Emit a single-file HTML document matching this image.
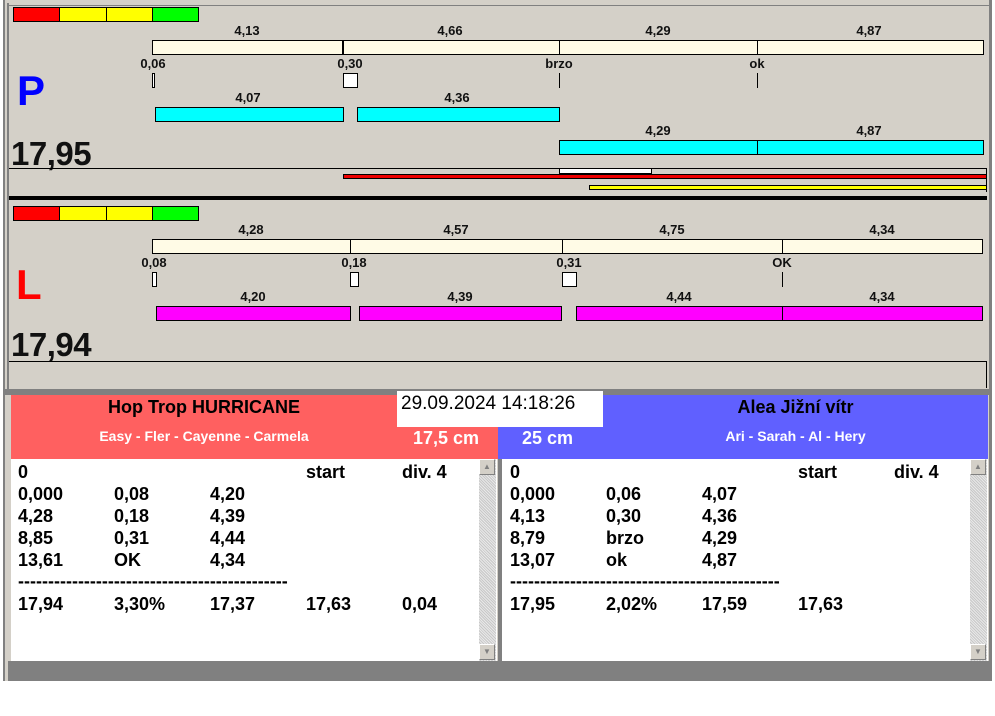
<!DOCTYPE html>
<html><head><meta charset="utf-8"><style>
*{margin:0;padding:0;box-sizing:border-box}
body{width:995px;height:716px;background:#fff;position:relative;overflow:hidden;font-family:"Liberation Sans",Arial,sans-serif;font-weight:bold}
div{position:absolute}
.bg{background:#d4d0c8}
.b{border:1px solid #000}
.cr{background:#fffbe6}
.cy{background:#00ffff}
.mg{background:#ff00ff}
.lb{font-size:13px;width:80px;text-align:center;color:#111}
.t{font-size:18px;color:#000;line-height:22px}
.sb{width:17px;background:repeating-linear-gradient(45deg,#e8e8e8 0 1px,#c8c8c8 1px 2px)}
.sbb{width:16px;height:16px;background:#d4d0c8;border:1px solid #fff;border-right-color:#808080;border-bottom-color:#808080;font-size:8px;color:#808080;text-align:center;line-height:14px}
</style></head><body>
<div class="bg" style="left:3px;top:0;width:989px;height:681px"></div>
<div style="left:3px;top:0;width:2px;height:681px;background:#808080"></div>
<div style="left:7px;top:3px;width:2px;height:386px;background:#808080"></div>
<div style="left:989px;top:0;width:3px;height:681px;background:#808080"></div>
<div style="left:7px;top:5px;width:982px;height:1px;background:#808080"></div>

<!-- P panel -->
<div style="left:13px;top:7px;width:47px;height:15px;background:#f00" class="b"></div>
<div style="left:59px;top:7px;width:48px;height:15px;background:#ff0" class="b"></div>
<div style="left:106px;top:7px;width:47px;height:15px;background:#ff0" class="b"></div>
<div style="left:152px;top:7px;width:47px;height:15px;background:#0f0" class="b"></div>

<div class="lb" style="left:207px;top:23px">4,13</div>
<div class="lb" style="left:410px;top:23px">4,66</div>
<div class="lb" style="left:618px;top:23px">4,29</div>
<div class="lb" style="left:829px;top:23px">4,87</div>
<div class="cr b" style="left:152px;top:40px;width:832px;height:15px"></div>
<div style="left:342px;top:40px;width:2px;height:15px;background:#000"></div>
<div style="left:559px;top:40px;width:1px;height:15px;background:#000"></div>
<div style="left:757px;top:40px;width:1px;height:15px;background:#000"></div>
<div class="lb" style="left:113px;top:56px">0,06</div>
<div class="lb" style="left:310px;top:56px">0,30</div>
<div class="lb" style="left:519px;top:56px">brzo</div>
<div class="lb" style="left:717px;top:56px">ok</div>
<div class="b" style="left:152px;top:73px;width:3px;height:15px;background:#fff"></div>
<div class="b" style="left:343px;top:73px;width:15px;height:15px;background:#fff"></div>
<div style="left:559px;top:73px;width:1px;height:15px;background:#000"></div>
<div style="left:757px;top:73px;width:1px;height:15px;background:#000"></div>
<div class="lb" style="left:208px;top:90px">4,07</div>
<div class="lb" style="left:417px;top:90px">4,36</div>
<div class="cy b" style="left:155px;top:107px;width:189px;height:15px"></div>
<div class="cy b" style="left:357px;top:107px;width:203px;height:15px"></div>
<div class="lb" style="left:618px;top:123px">4,29</div>
<div class="lb" style="left:829px;top:123px">4,87</div>
<div class="cy b" style="left:559px;top:140px;width:425px;height:15px"></div>
<div style="left:757px;top:140px;width:1px;height:15px;background:#000"></div>
<div style="left:17px;top:68px;font-size:42px;color:#0000ff;line-height:46px">P</div>
<div style="left:11px;top:136px;font-size:33px;color:#111;line-height:36px;letter-spacing:-0.5px">17,95</div>
<div style="left:9px;top:168px;width:978px;height:1px;background:#000"></div>
<div style="left:986px;top:168px;width:1px;height:24px;background:#000"></div>
<div class="b" style="left:559px;top:168px;width:93px;height:6px;background:#fff"></div>
<div class="b" style="left:343px;top:174px;width:644px;height:5px;background:#e00"></div>
<div class="b" style="left:589px;top:185px;width:398px;height:5px;background:#ff0"></div>
<div style="left:9px;top:196px;width:978px;height:4px;background:#000"></div>

<!-- L panel -->
<div style="left:13px;top:206px;width:47px;height:15px;background:#f00" class="b"></div>
<div style="left:59px;top:206px;width:48px;height:15px;background:#ff0" class="b"></div>
<div style="left:106px;top:206px;width:47px;height:15px;background:#ff0" class="b"></div>
<div style="left:152px;top:206px;width:47px;height:15px;background:#0f0" class="b"></div>
<div class="lb" style="left:211px;top:222px">4,28</div>
<div class="lb" style="left:416px;top:222px">4,57</div>
<div class="lb" style="left:632px;top:222px">4,75</div>
<div class="lb" style="left:842px;top:222px">4,34</div>
<div class="cr b" style="left:152px;top:239px;width:831px;height:15px"></div>
<div style="left:350px;top:239px;width:1px;height:15px;background:#000"></div>
<div style="left:562px;top:239px;width:1px;height:15px;background:#000"></div>
<div style="left:782px;top:239px;width:1px;height:15px;background:#000"></div>
<div class="lb" style="left:114px;top:255px">0,08</div>
<div class="lb" style="left:314px;top:255px">0,18</div>
<div class="lb" style="left:529px;top:255px">0,31</div>
<div class="lb" style="left:742px;top:255px">OK</div>
<div class="b" style="left:152px;top:272px;width:5px;height:15px;background:#fff"></div>
<div class="b" style="left:350px;top:272px;width:9px;height:15px;background:#fff"></div>
<div class="b" style="left:562px;top:272px;width:15px;height:15px;background:#fff"></div>
<div style="left:782px;top:272px;width:1px;height:15px;background:#000"></div>
<div class="lb" style="left:213px;top:289px">4,20</div>
<div class="lb" style="left:420px;top:289px">4,39</div>
<div class="lb" style="left:639px;top:289px">4,44</div>
<div class="lb" style="left:842px;top:289px">4,34</div>
<div class="mg b" style="left:156px;top:306px;width:195px;height:15px"></div>
<div class="mg b" style="left:359px;top:306px;width:203px;height:15px"></div>
<div class="mg b" style="left:576px;top:306px;width:407px;height:15px"></div>
<div style="left:782px;top:306px;width:1px;height:15px;background:#000"></div>
<div style="left:16px;top:262px;font-size:42px;color:#f00;line-height:46px">L</div>
<div style="left:11px;top:327px;font-size:33px;color:#111;line-height:36px;letter-spacing:-0.5px">17,94</div>
<div style="left:9px;top:361px;width:978px;height:1px;background:#000"></div>
<div style="left:986px;top:361px;width:1px;height:27px;background:#000"></div>
<div style="left:3px;top:389px;width:989px;height:6px;background:#808080"></div>

<!-- headers -->
<div style="left:11px;top:395px;width:487px;height:64px;background:#ff6060"></div>
<div style="left:498px;top:395px;width:490px;height:64px;background:#6060ff"></div>
<div style="left:11px;top:397px;width:386px;text-align:center;font-size:18px">Hop Trop HURRICANE</div>
<div style="left:11px;top:428px;width:386px;text-align:center;font-size:14px;color:#fff">Easy - Fler - Cayenne - Carmela</div>
<div style="left:413px;top:428px;font-size:18px;color:#fff">17,5 cm</div>
<div style="left:522px;top:428px;font-size:18px;color:#fff">25 cm</div>
<div style="left:603px;top:397px;width:385px;text-align:center;font-size:18px">Alea Jižní vítr</div>
<div style="left:603px;top:428px;width:385px;text-align:center;font-size:14px;color:#fff">Ari - Sarah - Al - Hery</div>
<div style="left:397px;top:391px;width:206px;height:36px;background:#fff;font-weight:normal;font-size:19px;padding:2px 0 0 4px">29.09.2024 14:18:26</div>

<!-- lists -->
<div style="left:11px;top:459px;width:486px;height:202px;background:#fff"></div>
<div class="sb" style="left:479px;top:459px;height:202px"></div>
<div class="sbb" style="left:479px;top:459px">▲</div>
<div class="sbb" style="left:479px;top:644px">▼</div>
<div style="left:502px;top:459px;width:486px;height:202px;background:#fff"></div>
<div class="sb" style="left:970px;top:459px;height:202px"></div>
<div class="sbb" style="left:970px;top:459px">▲</div>
<div class="sbb" style="left:970px;top:644px">▼</div>
<div style="left:498px;top:459px;width:4px;height:202px;background:#808080"></div>
<div style="left:8px;top:661px;width:981px;height:20px;background:#808080"></div>

<div class="t" style="left:18px;top:461px">0<br>0,000<br>4,28<br>8,85<br>13,61</div>
<div class="t" style="left:114px;top:483px">0,08<br>0,18<br>0,31<br>OK</div>
<div class="t" style="left:210px;top:483px">4,20<br>4,39<br>4,44<br>4,34</div>
<div class="t" style="left:306px;top:461px">start</div>
<div class="t" style="left:402px;top:461px">div. 4</div>
<div class="t" style="left:18px;top:570px;letter-spacing:0">---------------------------------------------</div>
<div class="t" style="left:18px;top:593px">17,94</div>
<div class="t" style="left:114px;top:593px">3,30%</div>
<div class="t" style="left:210px;top:593px">17,37</div>
<div class="t" style="left:306px;top:593px">17,63</div>
<div class="t" style="left:402px;top:593px">0,04</div>

<div class="t" style="left:510px;top:461px">0<br>0,000<br>4,13<br>8,79<br>13,07</div>
<div class="t" style="left:606px;top:483px">0,06<br>0,30<br>brzo<br>ok</div>
<div class="t" style="left:702px;top:483px">4,07<br>4,36<br>4,29<br>4,87</div>
<div class="t" style="left:798px;top:461px">start</div>
<div class="t" style="left:894px;top:461px">div. 4</div>
<div class="t" style="left:510px;top:570px;letter-spacing:0">---------------------------------------------</div>
<div class="t" style="left:510px;top:593px">17,95</div>
<div class="t" style="left:606px;top:593px">2,02%</div>
<div class="t" style="left:702px;top:593px">17,59</div>
<div class="t" style="left:798px;top:593px">17,63</div>
</body></html>
